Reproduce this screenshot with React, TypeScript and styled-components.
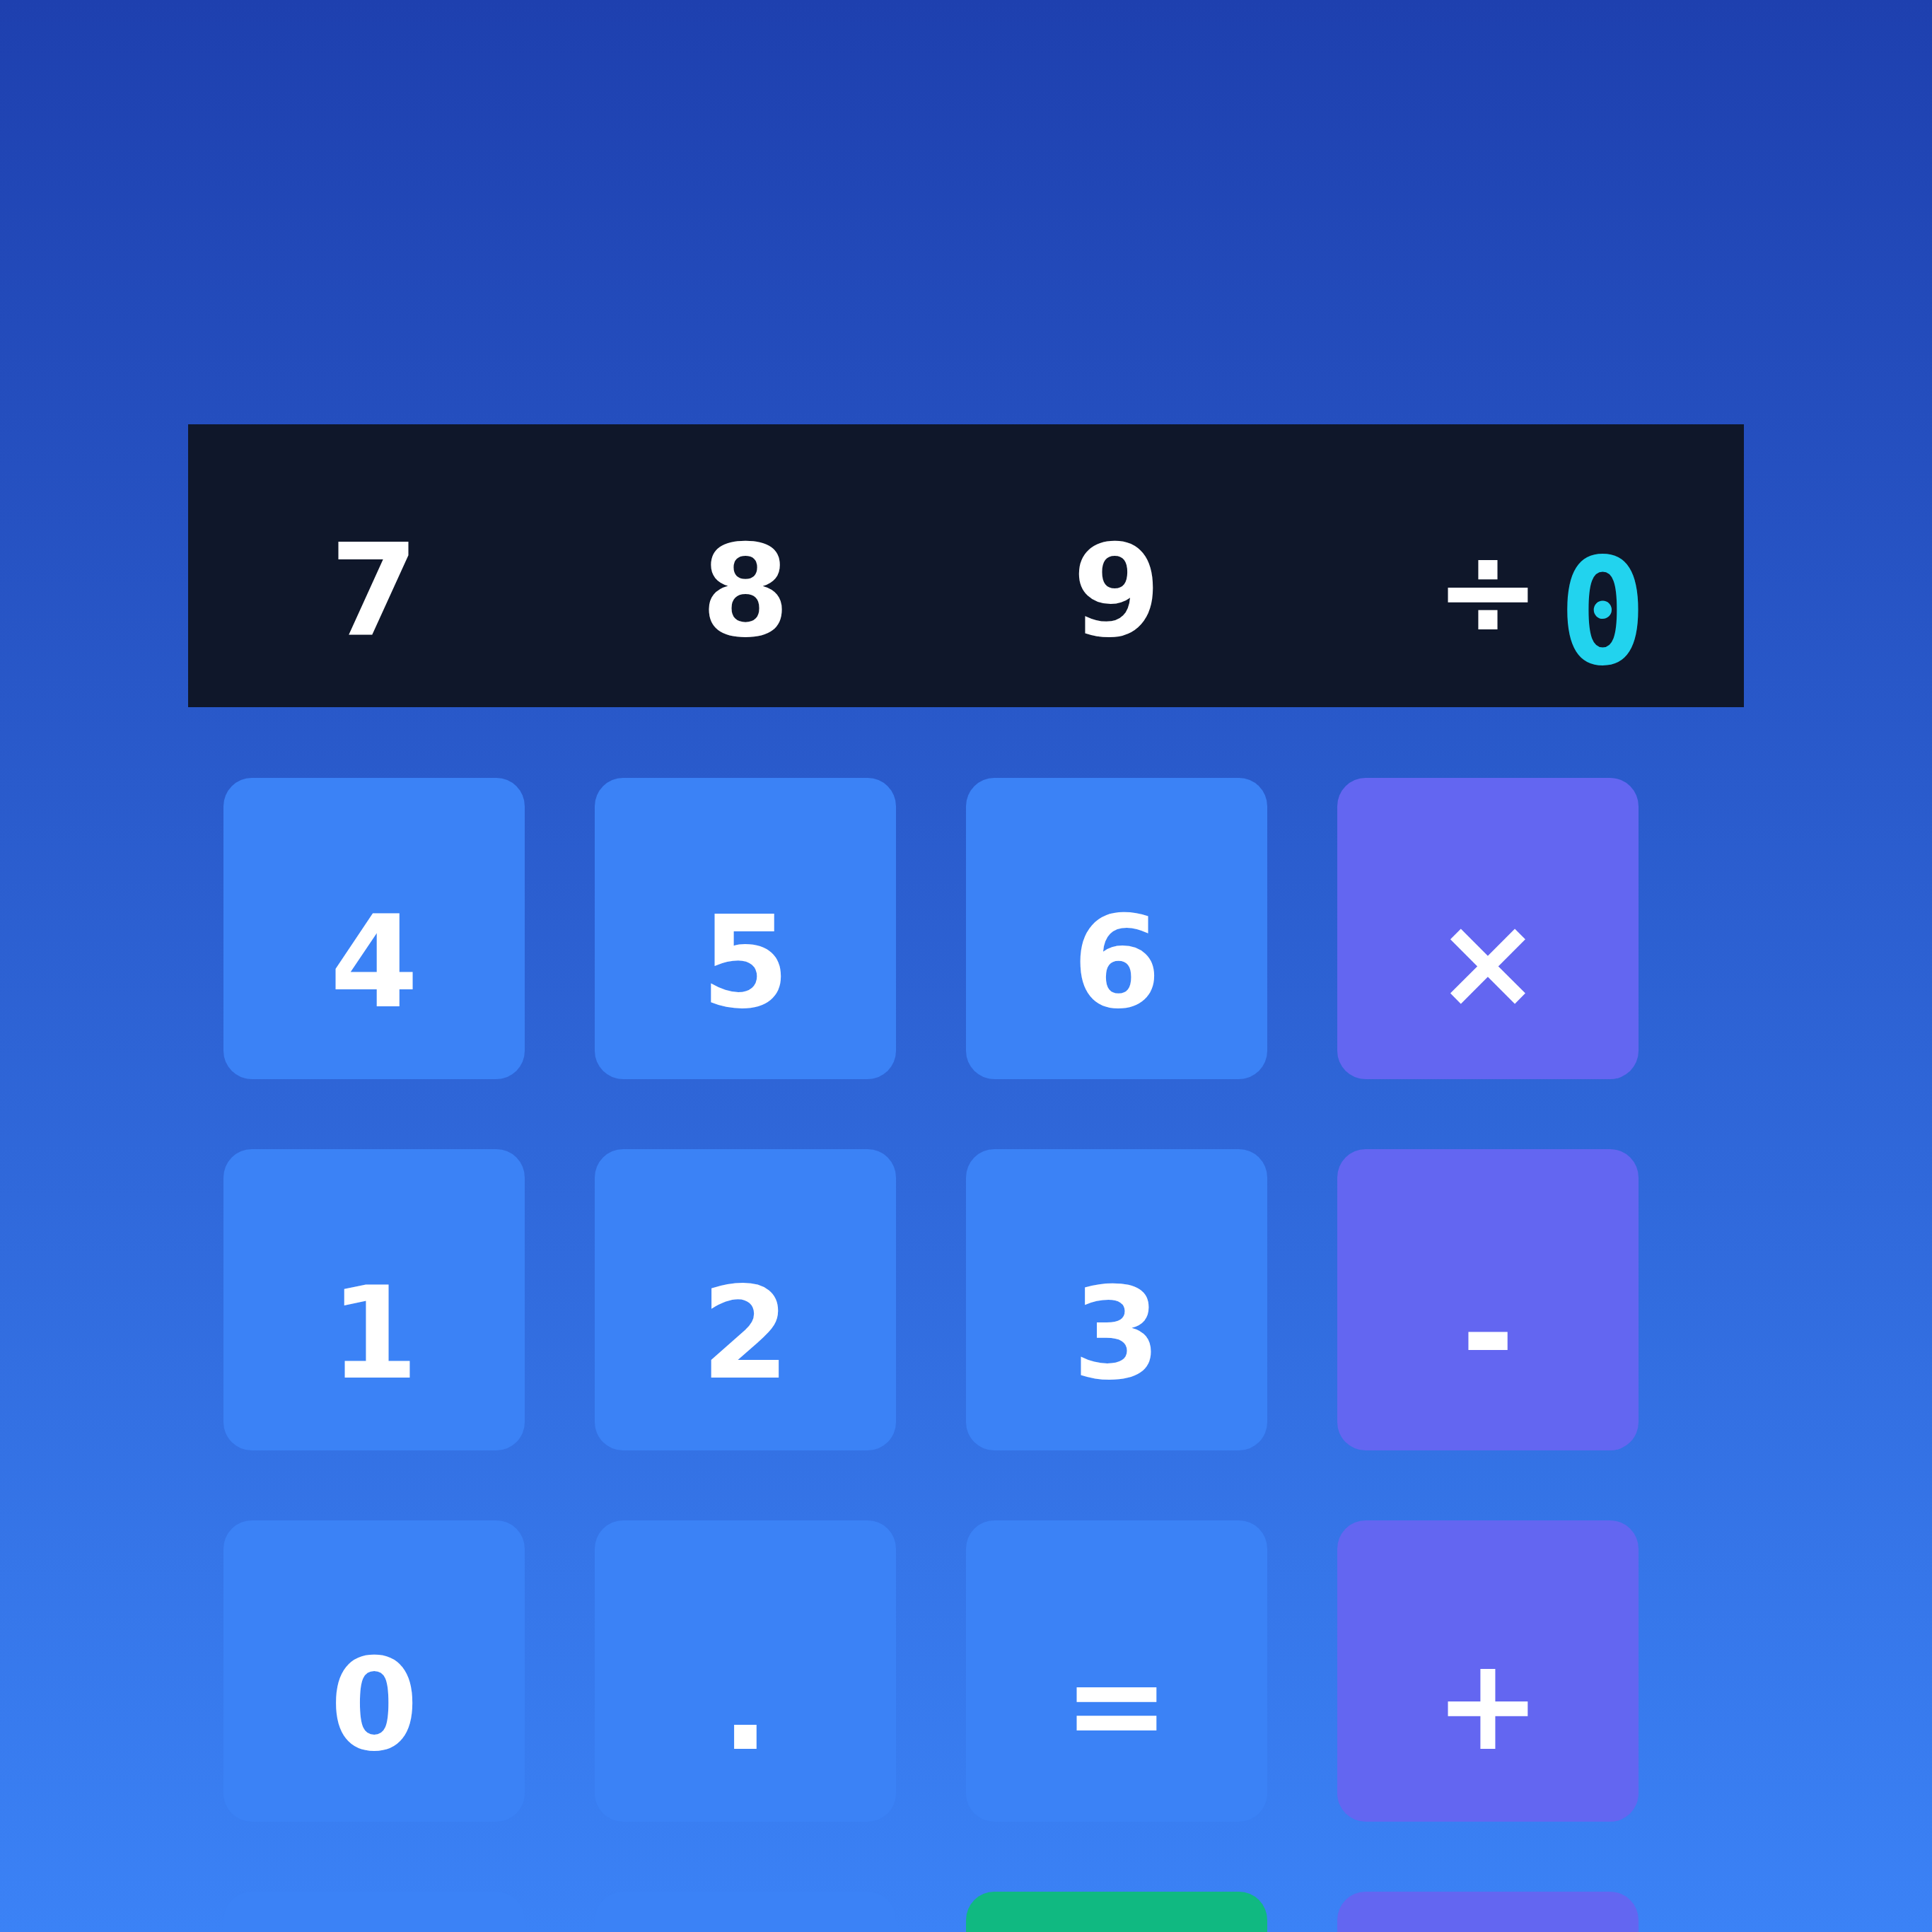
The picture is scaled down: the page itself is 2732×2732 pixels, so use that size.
import React from "react";
import styled, { createGlobalStyle } from "styled-components";

const GlobalStyle = createGlobalStyle`
  html, body {
    margin: 0;
    padding: 0;
  }
  body {
    font-family: "DejaVu Sans", "Liberation Sans", sans-serif;
  }
  * {
    box-sizing: border-box;
  }
`;

const Page = styled.div`
  height: 100vh;
  overflow: hidden;
  background: linear-gradient(180deg, #1e40af 0%, #3b82f6 100%);
  padding-top: 600px;
`;

const Calculator = styled.div`
  width: 2200px;
  margin: 0 auto;
  display: flex;
  flex-direction: column;
  gap: 100px;
`;

const Display = styled.div`
  position: relative;
  height: 400px;
  background: #0f172a;
`;

const KeyGrid = styled.div<{ $rowGap: number }>`
  display: grid;
  grid-template-columns: repeat(4, 426px);
  column-gap: 99px;
  row-gap: ${(p) => p.$rowGap}px;
  padding-left: 50px;
`;

const DisplayKey = styled.div`
  height: 400px;
  display: flex;
  justify-content: center;
  align-items: flex-start;
  padding-top: 146px;
  font-family: "DejaVu Sans", sans-serif;
  font-weight: 700;
  font-size: 180px;
  line-height: 180px;
  color: #ffffff;
`;

const Readout = styled.div`
  position: absolute;
  top: 162px;
  right: 137px;
  font-family: "DejaVu Sans Mono", "Liberation Mono", monospace;
  font-weight: 700;
  font-size: 208px;
  line-height: 208px;
  color: #22d3ee;
`;

type Variant = "digit" | "op" | "action";

const keyColors: Record<Variant, string> = {
  digit: "#3b82f6",
  op: "#6366f1",
  action: "#10b981",
};

const Key = styled.button<{ $variant: Variant }>`
  width: 426px;
  height: 426px;
  border: none;
  border-radius: 40px;
  padding: 171px 0 0;
  margin: 0;
  display: flex;
  justify-content: center;
  align-items: flex-start;
  background: ${(p) => keyColors[p.$variant]};
  color: #ffffff;
  font-family: "DejaVu Sans", sans-serif;
  font-weight: 700;
  font-size: 180px;
  line-height: 180px;
  cursor: pointer;
`;

const topRow = ["7", "8", "9", "÷"];

const keys: { id: string; label: string; variant: Variant }[] = [
  { id: "4", label: "4", variant: "digit" },
  { id: "5", label: "5", variant: "digit" },
  { id: "6", label: "6", variant: "digit" },
  { id: "mul", label: "×", variant: "op" },
  { id: "1", label: "1", variant: "digit" },
  { id: "2", label: "2", variant: "digit" },
  { id: "3", label: "3", variant: "digit" },
  { id: "sub", label: "-", variant: "op" },
  { id: "0", label: "0", variant: "digit" },
  { id: "dot", label: ".", variant: "digit" },
  { id: "eq", label: "=", variant: "digit" },
  { id: "add", label: "+", variant: "op" },
  { id: "x1", label: "", variant: "digit" },
  { id: "x2", label: "", variant: "digit" },
  { id: "clear", label: "", variant: "action" },
  { id: "back", label: "", variant: "op" },
];

export default function App() {
  return (
    <>
      <GlobalStyle />
      <Page>
        <Calculator>
          <Display>
            <KeyGrid $rowGap={0}>
              {topRow.map((k) => (
                <DisplayKey key={k}>{k}</DisplayKey>
              ))}
            </KeyGrid>
            <Readout>0</Readout>
          </Display>
          <KeyGrid $rowGap={99}>
            {keys.map((k) => (
              <Key key={k.id} $variant={k.variant} aria-label={k.id}>
                {k.label}
              </Key>
            ))}
          </KeyGrid>
        </Calculator>
      </Page>
    </>
  );
}
